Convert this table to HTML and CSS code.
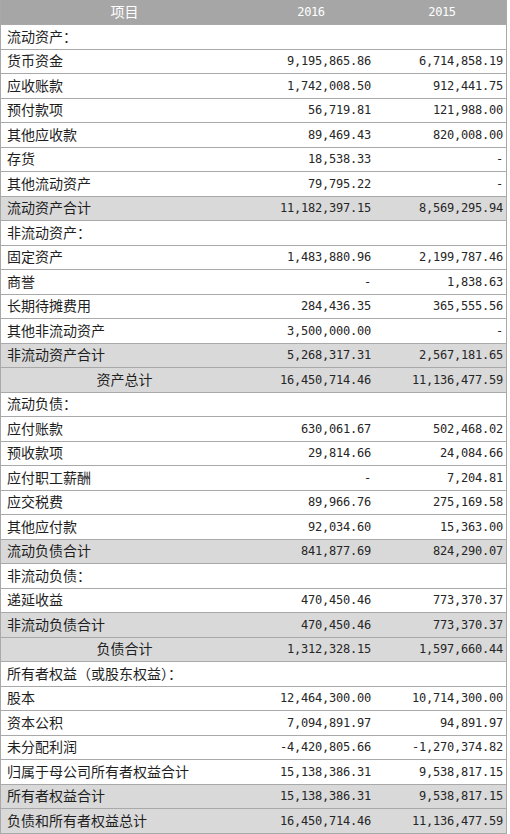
FILE: index.html
```html
<!DOCTYPE html>
<html lang="zh-CN">
<head>
<meta charset="utf-8">
<title>资产负债表</title>
<link rel="stylesheet" href="styles.css">
</head>
<body>
<div class="sheet">
  <div class="row head"><div class="c1">项目</div><div class="c2">2016</div><div class="c3">2015</div></div>
  <div class="row"><div class="c1">流动资产：</div><div class="num"></div><div class="num"></div></div>
  <div class="row"><div class="c1">货币资金</div><div class="num">9,195,865.86</div><div class="num">6,714,858.19</div></div>
  <div class="row"><div class="c1">应收账款</div><div class="num">1,742,008.50</div><div class="num">912,441.75</div></div>
  <div class="row"><div class="c1">预付款项</div><div class="num">56,719.81</div><div class="num">121,988.00</div></div>
  <div class="row"><div class="c1">其他应收款</div><div class="num">89,469.43</div><div class="num">820,008.00</div></div>
  <div class="row"><div class="c1">存货</div><div class="num">18,538.33</div><div class="num">-</div></div>
  <div class="row"><div class="c1">其他流动资产</div><div class="num">79,795.22</div><div class="num">-</div></div>
  <div class="row sum"><div class="c1">流动资产合计</div><div class="num">11,182,397.15</div><div class="num">8,569,295.94</div></div>
  <div class="row"><div class="c1">非流动资产：</div><div class="num"></div><div class="num"></div></div>
  <div class="row"><div class="c1">固定资产</div><div class="num">1,483,880.96</div><div class="num">2,199,787.46</div></div>
  <div class="row"><div class="c1">商誉</div><div class="num">-</div><div class="num">1,838.63</div></div>
  <div class="row"><div class="c1">长期待摊费用</div><div class="num">284,436.35</div><div class="num">365,555.56</div></div>
  <div class="row"><div class="c1">其他非流动资产</div><div class="num">3,500,000.00</div><div class="num">-</div></div>
  <div class="row sum"><div class="c1">非流动资产合计</div><div class="num">5,268,317.31</div><div class="num">2,567,181.65</div></div>
  <div class="row sum"><div class="c1 center">资产总计</div><div class="num">16,450,714.46</div><div class="num">11,136,477.59</div></div>
  <div class="row"><div class="c1">流动负债：</div><div class="num"></div><div class="num"></div></div>
  <div class="row"><div class="c1">应付账款</div><div class="num">630,061.67</div><div class="num">502,468.02</div></div>
  <div class="row"><div class="c1">预收款项</div><div class="num">29,814.66</div><div class="num">24,084.66</div></div>
  <div class="row"><div class="c1">应付职工薪酬</div><div class="num">-</div><div class="num">7,204.81</div></div>
  <div class="row"><div class="c1">应交税费</div><div class="num">89,966.76</div><div class="num">275,169.58</div></div>
  <div class="row"><div class="c1">其他应付款</div><div class="num">92,034.60</div><div class="num">15,363.00</div></div>
  <div class="row sum"><div class="c1">流动负债合计</div><div class="num">841,877.69</div><div class="num">824,290.07</div></div>
  <div class="row"><div class="c1">非流动负债：</div><div class="num"></div><div class="num"></div></div>
  <div class="row"><div class="c1">递延收益</div><div class="num">470,450.46</div><div class="num">773,370.37</div></div>
  <div class="row sum"><div class="c1">非流动负债合计</div><div class="num">470,450.46</div><div class="num">773,370.37</div></div>
  <div class="row sum"><div class="c1 center">负债合计</div><div class="num">1,312,328.15</div><div class="num">1,597,660.44</div></div>
  <div class="row"><div class="c1">所有者权益（或股东权益）：</div><div class="num"></div><div class="num"></div></div>
  <div class="row"><div class="c1">股本</div><div class="num">12,464,300.00</div><div class="num">10,714,300.00</div></div>
  <div class="row"><div class="c1">资本公积</div><div class="num">7,094,891.97</div><div class="num">94,891.97</div></div>
  <div class="row"><div class="c1">未分配利润</div><div class="num">-4,420,805.66</div><div class="num">-1,270,374.82</div></div>
  <div class="row"><div class="c1">归属于母公司所有者权益合计</div><div class="num">15,138,386.31</div><div class="num">9,538,817.15</div></div>
  <div class="row sum"><div class="c1">所有者权益合计</div><div class="num">15,138,386.31</div><div class="num">9,538,817.15</div></div>
  <div class="row sum"><div class="c1">负债和所有者权益总计</div><div class="num">16,450,714.46</div><div class="num">11,136,477.59</div></div>
</div>
</body>
</html>
```
FILE: styles.css
```css
html, body {
  margin: 0;
  padding: 0;
  background: #ffffff;
}
.sheet {
  width: 507px;
  box-sizing: border-box;
  border-left: 1px solid #a9a9a9;
  border-right: 1px solid #a9a9a9;
  border-bottom: 1px solid #a9a9a9;
  font-family: "Noto Sans CJK SC", "Liberation Sans", sans-serif;
  font-size: 14px;
  color: #1e1e1e;
}
.row {
  display: grid;
  grid-template-columns: 247px 126px 1fr;
  align-items: center;
  height: 24.5px;
  box-sizing: border-box;
  border-top: 1px solid #a9a9a9;
}
.row.head {
  height: 24px;
  border-top: none;
  background: #a6a6a6;
  color: #ffffff;
}
.row.sum {
  background: #d9d9d9;
}
.c1 {
  padding-left: 6px;
  padding-bottom: 2px;
  line-height: 20px;
  white-space: nowrap;
}
.c1.center {
  padding-left: 0;
  text-align: center;
}
.head .c1 {
  padding-left: 0;
  text-align: center;
}
.head .c2, .head .c3 {
  text-align: center;
  font-family: "DejaVu Sans Mono", "Liberation Mono", monospace;
  font-size: 12px;
  letter-spacing: -0.4px;
}
.head .c3 {
  padding-left: 4px;
}
.num {
  text-align: right;
  padding-right: 3px;
  font-family: "DejaVu Sans Mono", "Liberation Mono", monospace;
  font-size: 12px;
  letter-spacing: -0.22px;
  line-height: 20px;
  white-space: nowrap;
  color: #262626;
}
```
